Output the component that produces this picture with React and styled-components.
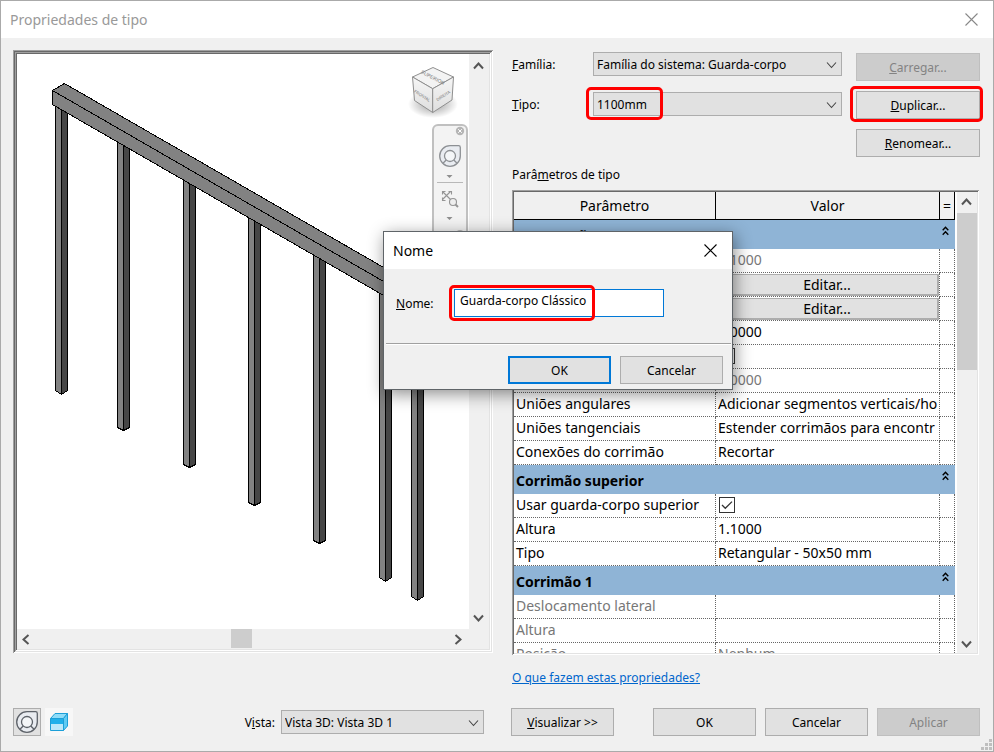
import React, { useState } from 'react';
import styled, { createGlobalStyle } from 'styled-components';

const GlobalStyle = createGlobalStyle`
  * {
    box-sizing: border-box;
  }

  body {
    margin: 0;
    background: #f0f0f0;
    color: #000;
    font-family: 'Noto Sans', 'Open Sans', sans-serif;
    font-size: 12px;
  }

  button, input, select {
    font-family: inherit;
    font-size: inherit;
    color: inherit;
  }
`;

const Window = styled.div`
  position: relative;
  display: flex;
  flex-direction: column;
  height: 100vh;
  min-height: 560px;
  border: 1px solid #aaa;
  background: #f0f0f0;
  overflow: hidden;
`;

const TitleBar = styled.header`
  display: flex;
  align-items: center;
  justify-content: space-between;
  flex: none;
  height: 37px;
  padding: 0 15px 0 9px;
  background: #fff;
  color: ${props => props.$active ? '#000' : '#999'};
`;

const Title = styled.h1`
  margin: 0;
  font-size: 14px;
  font-weight: 400;
`;

const CloseButton = styled.button`
  display: flex;
  padding: 0;
  border: 0;
  background: none;
`;

const Columns = styled.div`
  display: grid;
  grid-template-columns: 480fr 469fr;
  column-gap: 18px;
  padding: 0 13px 0 12px;
`;

const Main = styled(Columns)`
  flex: 1;
  min-height: 0;
  padding-top: 12px;
`;

const Footer = styled(Columns)`
  flex: none;
  align-items: center;
  padding-top: 20px;
  padding-bottom: 15px;
`;

/* ---- preview ---- */

const Preview = styled.section`
  display: grid;
  grid-template-columns: 1fr 20px;
  grid-template-rows: 1fr 20px;
  min-height: 0;
  margin-bottom: 35px;
  padding: 4px;
  box-shadow:
    inset 1px 1px #a0a0a0, inset -1px -1px #fff,
    inset 2px 2px #696969, inset -2px -2px #e3e3e3,
    inset 3px 3px #a0a0a0, inset -3px -3px #fff,
    inset 4px 4px #696969, inset -4px -4px #e3e3e3;
`;

const Canvas = styled.div`
  min-height: 0;
  background: #fff;
  overflow: hidden;

  svg {
    display: block;
    width: 100%;
    height: 100%;
  }
`;

const ScrollBar = styled.div`
  display: flex;
  flex-direction: ${props => props.$across ? 'row' : 'column'};
  justify-content: space-between;
  padding: ${props => props.$pad || '0'};
  background: #f0f0f0;
`;

const ScrollArrow = styled.button`
  display: flex;
  align-items: center;
  justify-content: center;
  flex: none;
  width: 18px;
  height: 20px;
  padding: 0;
  border: 0;
  background: none;
`;

const Thumb = styled.div`
  flex: none;
  background: #cdcdcd;
  ${props => props.$across
    ? 'width: 21px; height: 19px;'
    : 'height: 157px; margin: 1px 0 auto;'}
`;

/* ---- form ---- */

const Side = styled.section`
  display: flex;
  flex-direction: column;
  min-width: 0;
  min-height: 0;
  padding: 2px 0 0 1px;
`;

const Form = styled.div`
  display: grid;
  grid-template-columns: 1fr 124px;
  column-gap: 14px;
  flex: none;
`;

const Fields = styled.div`
  display: flex;
  flex-direction: column;
  gap: 16px;
`;

const Field = styled.div`
  position: relative;
  display: grid;
  grid-template-columns: 81px 1fr;
  align-items: center;
`;

const ButtonStack = styled.div`
  display: flex;
  flex-direction: column;
  gap: 10px;
  padding-top: 1px;
`;

const SelectWrap = styled.div`
  display: grid;
  align-items: center;
  width: ${props => props.$width || 'auto'};

  > * {
    grid-area: 1 / 1;
  }

  > svg {
    justify-self: end;
    margin-right: 4px;
    pointer-events: none;
  }
`;

const Select = styled.select`
  appearance: none;
  width: 100%;
  height: 24px;
  padding: 0 24px 0 3px;
  border: 1px solid #adadad;
  border-radius: 0;
  background: #e1e1e1;
`;

const Button = styled.button`
  position: relative;
  height: 28px;
  width: ${props => props.$width || '100%'};
  padding: 0;
  border: ${props => props.$primary ? '2px solid #0078d7' : '1px solid #adadad'};
  background: #e1e1e1;

  &:disabled {
    border-color: #bfbfbf;
    background: #ccc;
    color: #838383;
  }
`;

/* red marker drawn over a control */
const Marker = styled.span`
  position: absolute;
  top: ${props => props.$top};
  left: ${props => props.$left};
  width: ${props => props.$width};
  height: ${props => props.$height};
  border: 3px solid #f00;
  border-radius: 5px;
  pointer-events: none;
`;

const ListLabel = styled.div`
  flex: none;
  height: 20px;
  margin: 8px 0 5px;
  line-height: 20px;
`;

/* ---- parameter list ---- */

const ListBox = styled.div`
  display: grid;
  grid-template-columns: 1fr 20px;
  column-gap: 2px;
  flex: 1 1 0;
  min-height: 0;
  margin-right: 1px;
  padding: 2px;
  background: #fff;
  box-shadow:
    inset 1px 1px #a0a0a0, inset -1px -1px #fff,
    inset 2px 2px #696969, inset -2px -2px #e3e3e3;
`;

const ListClip = styled.div`
  min-height: 0;
  overflow: hidden;
`;

const Table = styled.table`
  width: 100%;
  table-layout: fixed;
  border-spacing: 0;
  font-size: 14px;
`;

const HeadCell = styled.th`
  width: ${props => props.$width};
  height: 28px;
  padding: 0;
  border-right: 1px solid #000;
  border-bottom: 1px solid #000;
  background: #f0f0f0;
  font-weight: 400;
  line-height: 20px;
`;

const GroupCell = styled.th`
  height: 29px;
  padding: 3px 0 0 2px;
  background: #8fb4d6;
  text-align: left;
  line-height: 20px;
`;

const GroupInner = styled.div`
  display: flex;
  justify-content: space-between;
  padding-right: 6px;
`;

const Cell = styled.td`
  height: 24px;
  padding: ${props => props.$tight ? '1px 0 0' : '0 0 2px 2px'};
  border-right: 1px dotted #666;
  border-bottom: 1px dotted #666;
  color: ${props => props.$dim ? '#777' : '#000'};
  line-height: 20px;
  white-space: nowrap;
  overflow: hidden;
`;

const EditButton = styled.button`
  display: block;
  width: 100%;
  height: 22px;
  padding: 0;
  border: 1px solid #adadad;
  border-width: 1px 2px 2px 1px;
  background: #e1e1e1;
  font-size: 14px;
  line-height: 18px;
`;

const CheckBox = styled.span`
  display: grid;
  width: 16px;
  height: 16px;
  margin-left: 1px;

  > * {
    grid-area: 1 / 1;
  }

  input {
    appearance: none;
    width: 16px;
    height: 16px;
    margin: 0;
    border: 1px solid #333;
    background: #fff;
  }

  svg {
    pointer-events: none;
  }
`;

const HelpLink = styled.a`
  flex: none;
  align-self: flex-start;
  height: 20px;
  margin-top: 13px;
  color: #0066cc;
  line-height: 20px;
`;

/* ---- footer ---- */

const FooterGroup = styled.div`
  display: flex;
  align-items: center;
  gap: ${props => props.$gap || '0'};
`;

const IconButton = styled.button`
  display: flex;
  align-items: center;
  justify-content: center;
  width: 28px;
  height: 28px;
  padding: 0;
  border: 1px solid ${props => props.$pressed ? '#adadad' : '#f7f7f7'};
  background: ${props => props.$pressed ? '#e1e1e1' : '#f7f7f7'};
`;

const ViewPicker = styled.div`
  display: flex;
  align-items: center;
  gap: 6px;
  margin: 0 9px 0 auto;
`;

const Spacer = styled.div`
  flex: 1;
`;

const Grip = styled.svg`
  position: absolute;
  right: 1px;
  bottom: 1px;
`;

/* ---- name dialog ---- */

const Dialog = styled.div`
  position: absolute;
  top: 230px;
  left: 382px;
  width: 350px;
  border: 1px solid #5f6468;
  background: #f0f0f0;
  box-shadow: 2px 4px 16px rgba(0, 0, 0, 0.45);
`;

const NameField = styled.div`
  position: relative;
  display: grid;
  grid-template-columns: 58px 210px;
  align-items: center;
  padding: 20px 12px 26px;
`;

const NameInput = styled.input`
  width: 100%;
  height: 28px;
  padding: 0 5px 5px;
  border: 1px solid #0078d7;
  background: #fff;
  outline: 0;
`;

const DialogButtons = styled.div`
  display: flex;
  justify-content: flex-end;
  gap: 9px;
  margin: 0 1px 0 2px;
  padding: 12px 8px 5px;
  border-top: 1px solid #a0a0a0;
  box-shadow: inset 0 1px #fff;
`;

const groups = [
  {
    title: 'Construção',
    rows: [
      { name: 'Altura do guarda-corpo', value: '1.1000', dim: true },
      { name: 'Estrutura do corrimão', edit: true },
      { name: 'Colocação dos balaústres', edit: true },
      { name: 'Deslocamento do balaústre', value: '0.0000' },
      { name: 'Usar ajuste da altura', check: false },
      { name: 'Ajuste da altura', value: '0.0000', dim: true },
      { name: 'Uniões angulares', value: 'Adicionar segmentos verticais/ho' },
      { name: 'Uniões tangenciais', value: 'Estender corrimãos para encontr' },
      { name: 'Conexões do corrimão', value: 'Recortar' },
    ],
  },
  {
    title: 'Corrimão superior',
    rows: [
      { name: 'Usar guarda-corpo superior', check: true },
      { name: 'Altura', value: '1.1000' },
      { name: 'Tipo', value: 'Retangular - 50x50 mm' },
    ],
  },
  {
    title: 'Corrimão 1',
    rows: [
      { name: 'Deslocamento lateral', value: '', dim: true },
      { name: 'Altura', value: '', dim: true },
      { name: 'Posição', value: 'Nenhum', dim: true },
    ],
  },
];

// left edge, top (under the rail), end of the side edges, end of the middle edge
const posts = [
  [55, 98, 390, 394],
  [117, 134, 427, 430],
  [183, 172, 464, 467],
  [248, 210, 502, 505],
  [313, 247, 540, 543],
  [379, 286, 577, 581],
  [411, 304, 596, 600],
];

const Cross = ({ size, color }) => (
  <svg width={size} height={size} viewBox="0 0 13 13" stroke={color} strokeWidth="1.1">
    <path d="M.5 .5l12 12M12.5 .5l-12 12" />
  </svg>
);

const arrows = {
  up: 'M2 8.5l4.5-5 4.5 5',
  down: 'M2 4.5l4.5 5 4.5-5',
  left: 'M8.5 2l-5 4.5 5 4.5',
  right: 'M4.5 2l5 4.5-5 4.5',
};

const Arrow = ({ to, thin }) => (
  <svg width="13" height="13" viewBox="0 0 13 13" fill="none" stroke={thin ? '#444' : '#555'} strokeWidth={thin ? 1.1 : 2}>
    <path d={arrows[to]} />
  </svg>
);

const Collapse = () => (
  <svg width="7" height="10" viewBox="0 0 7 10" fill="none" stroke="#000" strokeWidth="1.4">
    <path d="M.7 4.3l2.8-3 2.8 3M.7 8.7l2.8-3 2.8 3" />
  </svg>
);

const WheelShape = ({ color }) => (
  <g fill="none" stroke={color} strokeWidth="1.3">
    <path d="M11 .7h8.6q1.7 0 1.7 1.7V11A10.3 10.3 0 1 1 11 .7z" fill="#e9ecf1" />
    <circle cx="11" cy="11" r="5.5" fill="#f4f6f8" />
    <path d="M7.2 15l-3 3M14.8 15l3 3" />
  </g>
);

const Railing = () => (
  <svg viewBox="17 54 452 575" preserveAspectRatio="xMinYMin meet">
    <defs>
      <linearGradient id="side" x1="0" y1="0" x2="0" y2="1">
        <stop offset="0" stopColor="#f6f6f6" />
        <stop offset="1" stopColor="#dedede" />
      </linearGradient>
      <radialGradient id="ground">
        <stop offset="0" stopColor="#000" stopOpacity=".4" />
        <stop offset="1" stopColor="#000" stopOpacity="0" />
      </radialGradient>
    </defs>

    <g shapeRendering="crispEdges" stroke="#000" strokeWidth="1">
      {posts.map(([x, top, side, mid]) => (
        <g key={x} transform={`translate(${x} 0)`}>
          <path d={`M.5 ${top}.5V${side}.5L6.5 ${mid}.5V${top}.5z`} fill="#828282" />
          <path d={`M6.5 ${top}.5V${mid}.5L12.5 ${side}.5V${top}.5z`} fill="#464646" />
        </g>
      ))}
      <path d="M52.5 90.5L64.5 83.5L430.5 294.5V322.5L52.5 104.5z" fill="#828282" />
      <path d="M52.5 90.5L430.5 308.5" />
    </g>

    {/* view cube */}
    <ellipse cx="433" cy="104" rx="25" ry="14" fill="url(#ground)" />
    <g stroke="#8f8f8f" strokeWidth="1" strokeLinejoin="round">
      <path d="M412.5 77L433 67.5L453.5 77L432.7 88.7z" fill="#f3f3f3" />
      <path d="M412.5 77L432.7 88.7V112.5L414.5 100.5z" fill="url(#side)" />
      <path d="M453.5 77L432.7 88.7V112.5L452 100z" fill="url(#side)" />
    </g>
    <g fill="#777" fontFamily="Liberation Sans, sans-serif" fontSize="5" textAnchor="middle">
      <text transform="translate(432 79) rotate(28)">SUPERIOR</text>
      <text transform="translate(421.5 97) rotate(33)" fontSize="4">FRONTAL</text>
      <text transform="translate(444 97) rotate(-33)" fontSize="4">DIREITA</text>
    </g>

    {/* navigation bar */}
    <rect x="433" y="125" width="34" height="190" rx="5" fill="#f3f3f3" stroke="#c0c0c0" strokeWidth="2" />
    <circle cx="460" cy="131" r="4.2" fill="#b5b5b5" />
    <path d="M458.2 129.2l3.6 3.6M461.8 129.2l-3.6 3.6" stroke="#fff" />
    <g transform="translate(439 145)">
      <WheelShape color="#8d9094" />
    </g>
    <path d="M446.5 175h6l-3 3zM446.5 217h6l-3 3z" fill="#8f8f8f" />
    <path d="M437 182.5h26" stroke="#b8b8b8" />
    <g fill="none" stroke="#959595" strokeWidth="1.1">
      <path d="M442.5 191.5l8 8M450.5 191.5l-8 8" />
      <path d="M442.5 194.5v-3h3M448.5 191.5h3v3M442.5 197.500v3h3" />
      <circle cx="453" cy="202" r="3.5" fill="#eee" />
      <path d="M455.5 204.5l2.500 2.500" strokeWidth="2" />
    </g>
    <circle cx="460" cy="234" r="4" fill="#b5b5b5" />
  </svg>
);

const Letter = ({ children }) => <u>{children}</u>;

function DropDown({ id, width, children }) {
  return (
    <SelectWrap $width={width}>
      <Select id={id}>
        <option>{children}</option>
      </Select>
      <Arrow to="down" thin />
    </SelectWrap>
  );
}

function CheckField({ label, initial }) {
  const [on, setOn] = useState(initial);
  return (
    <CheckBox>
      <input type="checkbox" aria-label={label} checked={on} onChange={() => setOn(!on)} />
      {on && (
        <svg width="16" height="16" viewBox="0 0 16 16" fill="none" stroke="#333" strokeWidth="1.3">
          <path d="M3 8l3.3 3.3L13 4.6" />
        </svg>
      )}
    </CheckBox>
  );
}

function ParameterRow({ row }) {
  let value = row.value;
  if (row.edit) value = <EditButton type="button">Editar...</EditButton>;
  if (row.check !== undefined) value = <CheckField label={row.name} initial={row.check} />;

  return (
    <tr>
      <Cell $dim={row.dim}>{row.name}</Cell>
      <Cell $dim={row.dim} $tight={row.edit}>{value}</Cell>
      <Cell />
    </tr>
  );
}

function ParameterList() {
  return (
    <ListBox>
      <ListClip>
        <Table aria-labelledby="list-label">
          <thead>
            <tr>
              <HeadCell $width="202px">Parâmetro</HeadCell>
              <HeadCell>Valor</HeadCell>
              <HeadCell $width="15px">=</HeadCell>
            </tr>
          </thead>
          {groups.map(group => (
            <tbody key={group.title}>
              <tr>
                <GroupCell colSpan="3">
                  <GroupInner>
                    {group.title}
                    <Collapse />
                  </GroupInner>
                </GroupCell>
              </tr>
              {group.rows.map(row => <ParameterRow key={row.name} row={row} />)}
            </tbody>
          ))}
        </Table>
      </ListClip>
      <ScrollBar>
        <ScrollArrow aria-label="Para cima"><Arrow to="up" /></ScrollArrow>
        <Thumb />
        <ScrollArrow aria-label="Para baixo"><Arrow to="down" /></ScrollArrow>
      </ScrollBar>
    </ListBox>
  );
}

function NameDialog() {
  const [name, setName] = useState('Guarda-corpo Clássico');
  return (
    <Dialog role="dialog" aria-label="Nome">
      <TitleBar $active>
        <Title as="h2">Nome</Title>
        <CloseButton aria-label="Fechar"><Cross size={13} color="#000" /></CloseButton>
      </TitleBar>
      <NameField>
        <label htmlFor="name"><Letter>N</Letter>ome:</label>
        <NameInput id="name" value={name} onChange={e => setName(e.target.value)} />
        <Marker $top="16px" $left="65px" $width="146px" $height="36px" />
      </NameField>
      <DialogButtons>
        <Button $width="103px" $primary>OK</Button>
        <Button $width="103px">Cancelar</Button>
      </DialogButtons>
    </Dialog>
  );
}

function App() {
  return (
    <>
      <GlobalStyle />
      <Window>
        <TitleBar>
          <Title>Propriedades de tipo</Title>
          <CloseButton aria-label="Fechar"><Cross size={13} color="#888" /></CloseButton>
        </TitleBar>

        <Main as="main">
          <Preview>
            <Canvas><Railing /></Canvas>
            <ScrollBar $pad="2px 0">
              <ScrollArrow aria-label="Para cima"><Arrow to="up" /></ScrollArrow>
              <ScrollArrow aria-label="Para baixo"><Arrow to="down" /></ScrollArrow>
            </ScrollBar>
            <ScrollBar $across $pad="0 3px 0 0">
              <ScrollArrow aria-label="Esquerda"><Arrow to="left" /></ScrollArrow>
              <Thumb $across />
              <ScrollArrow aria-label="Direita"><Arrow to="right" /></ScrollArrow>
            </ScrollBar>
          </Preview>

          <Side>
            <Form>
              <Fields>
                <Field>
                  <label htmlFor="family"><Letter>F</Letter>amília:</label>
                  <DropDown id="family">Família do sistema: Guarda-corpo</DropDown>
                </Field>
                <Field>
                  <label htmlFor="type"><Letter>T</Letter>ipo:</label>
                  <DropDown id="type">1100mm</DropDown>
                  <Marker $top="-5px" $left="74px" $width="77px" $height="33px" />
                </Field>
              </Fields>
              <ButtonStack>
                <Button disabled><Letter>C</Letter>arregar...</Button>
                <Button>
                  <Letter>D</Letter>uplicar...
                  <Marker $top="-6px" $left="-7px" $width="133px" $height="36px" />
                </Button>
                <Button><Letter>R</Letter>enomear...</Button>
              </ButtonStack>
            </Form>
            <ListLabel id="list-label">Parâ<Letter>m</Letter>etros de tipo</ListLabel>
            <ParameterList />
            <HelpLink href="#ajuda">O que fazem estas propriedades?</HelpLink>
          </Side>
        </Main>

        <Footer as="footer">
          <FooterGroup $gap="4px">
            <IconButton $pressed aria-label="Roda de navegação">
              <svg width="22" height="22" viewBox="0 0 22 22"><WheelShape color="#5d6269" /></svg>
            </IconButton>
            <IconButton aria-label="Cubo de vista">
              <svg width="18" height="18" viewBox="0 0 18 18" stroke="#1c9fd8" strokeLinejoin="round">
                <path d="M.5 5.5L5 .5h12.5l-4 5z" fill="#8fdcf8" />
                <path d="M.5 5.5h13v12H.5z" fill="#b9e8fa" />
                <path d="M1 6h12v5H1z" fill="#1fb0ea" stroke="none" />
                <path d="M13.5 5.5l4-5v12.5l-4 4.5z" fill="#5fcbf3" />
              </svg>
            </IconButton>
            <ViewPicker>
              <label htmlFor="view">V<Letter>i</Letter>sta:</label>
              <DropDown id="view" width="203px">Vista 3D: Vista 3D 1</DropDown>
            </ViewPicker>
          </FooterGroup>
          <FooterGroup $gap="9px">
            <Button $width="103px"><Letter>V</Letter>isualizar &gt;&gt;</Button>
            <Spacer />
            <Button $width="103px">OK</Button>
            <Button $width="103px">Cancelar</Button>
            <Button $width="103px" disabled>Aplicar</Button>
          </FooterGroup>
        </Footer>

        <Grip width="11" height="11" viewBox="0 0 11 11" fill="#bfbfbf">
          <path d="M8 0h3v3H8zM4 4h3v3H4zM8 4h3v3H8zM0 8h3v3H0zM4 8h3v3H4zM8 8h3v3H8z" />
        </Grip>
        <NameDialog />
      </Window>
    </>
  );
}

export default App;
